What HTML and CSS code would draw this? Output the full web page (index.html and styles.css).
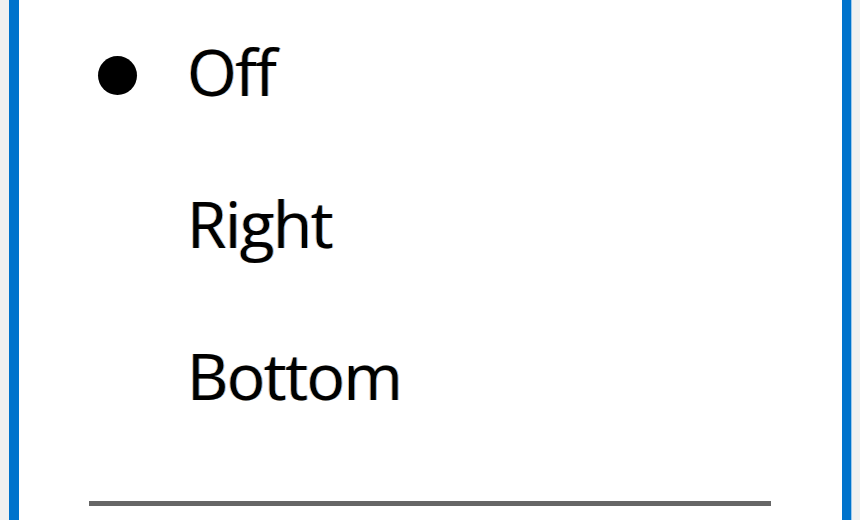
FILE: index.html
```html
<!DOCTYPE html>
<html>
<head>
<meta charset="utf-8">
<link rel="stylesheet" href="styles.css">
</head>
<body>
<div class="frame">
  <div class="menu">
    <ul class="items">
      <li class="item checked"><span class="mark"><span class="dot"></span></span><span class="label">Off</span></li>
      <li class="item"><span class="mark"></span><span class="label">Right</span></li>
      <li class="item"><span class="mark"></span><span class="label">Bottom</span></li>
    </ul>
    <div class="separator"></div>
  </div>
</div>
</body>
</html>
```

FILE: styles.css
```css
html, body {
  margin: 0;
  padding: 0;
  width: 860px;
  height: 520px;
  overflow: hidden;
  background: #f0f0f0;
}

.frame {
  display: flex;
  height: 520px;
  padding: 0 9px;
}

.menu {
  flex: 1;
  background: #ffffff;
  border-left: 10px solid #0073cc;
  border-right: 9px solid #0073cc;
  box-shadow: 1px 0 0 #9cc8ec;
  overflow: hidden;
}

.items {
  list-style: none;
  margin: -4px 0 0 0;
  padding: 0;
}

.item {
  display: flex;
  align-items: center;
  height: 152px;
  font-family: "Open Sans", "Noto Sans", sans-serif;
  font-size: 64px;
  letter-spacing: -1.5px;
  color: #000;
}

.mark {
  width: 168px;
  display: flex;
  align-items: center;
}

.dot {
  width: 39px;
  height: 39px;
  margin-left: 79px;
  margin-top: 6px;
  border-radius: 50%;
  background: #000;
}

.label {
  line-height: 152px;
  text-shadow: -1px 0 rgba(230, 140, 40, 0.55), 1px 0 rgba(30, 130, 230, 0.55);
}

.separator {
  height: 5px;
  margin: 49px 71px 0 70px;
  background: #666666;
}
```
